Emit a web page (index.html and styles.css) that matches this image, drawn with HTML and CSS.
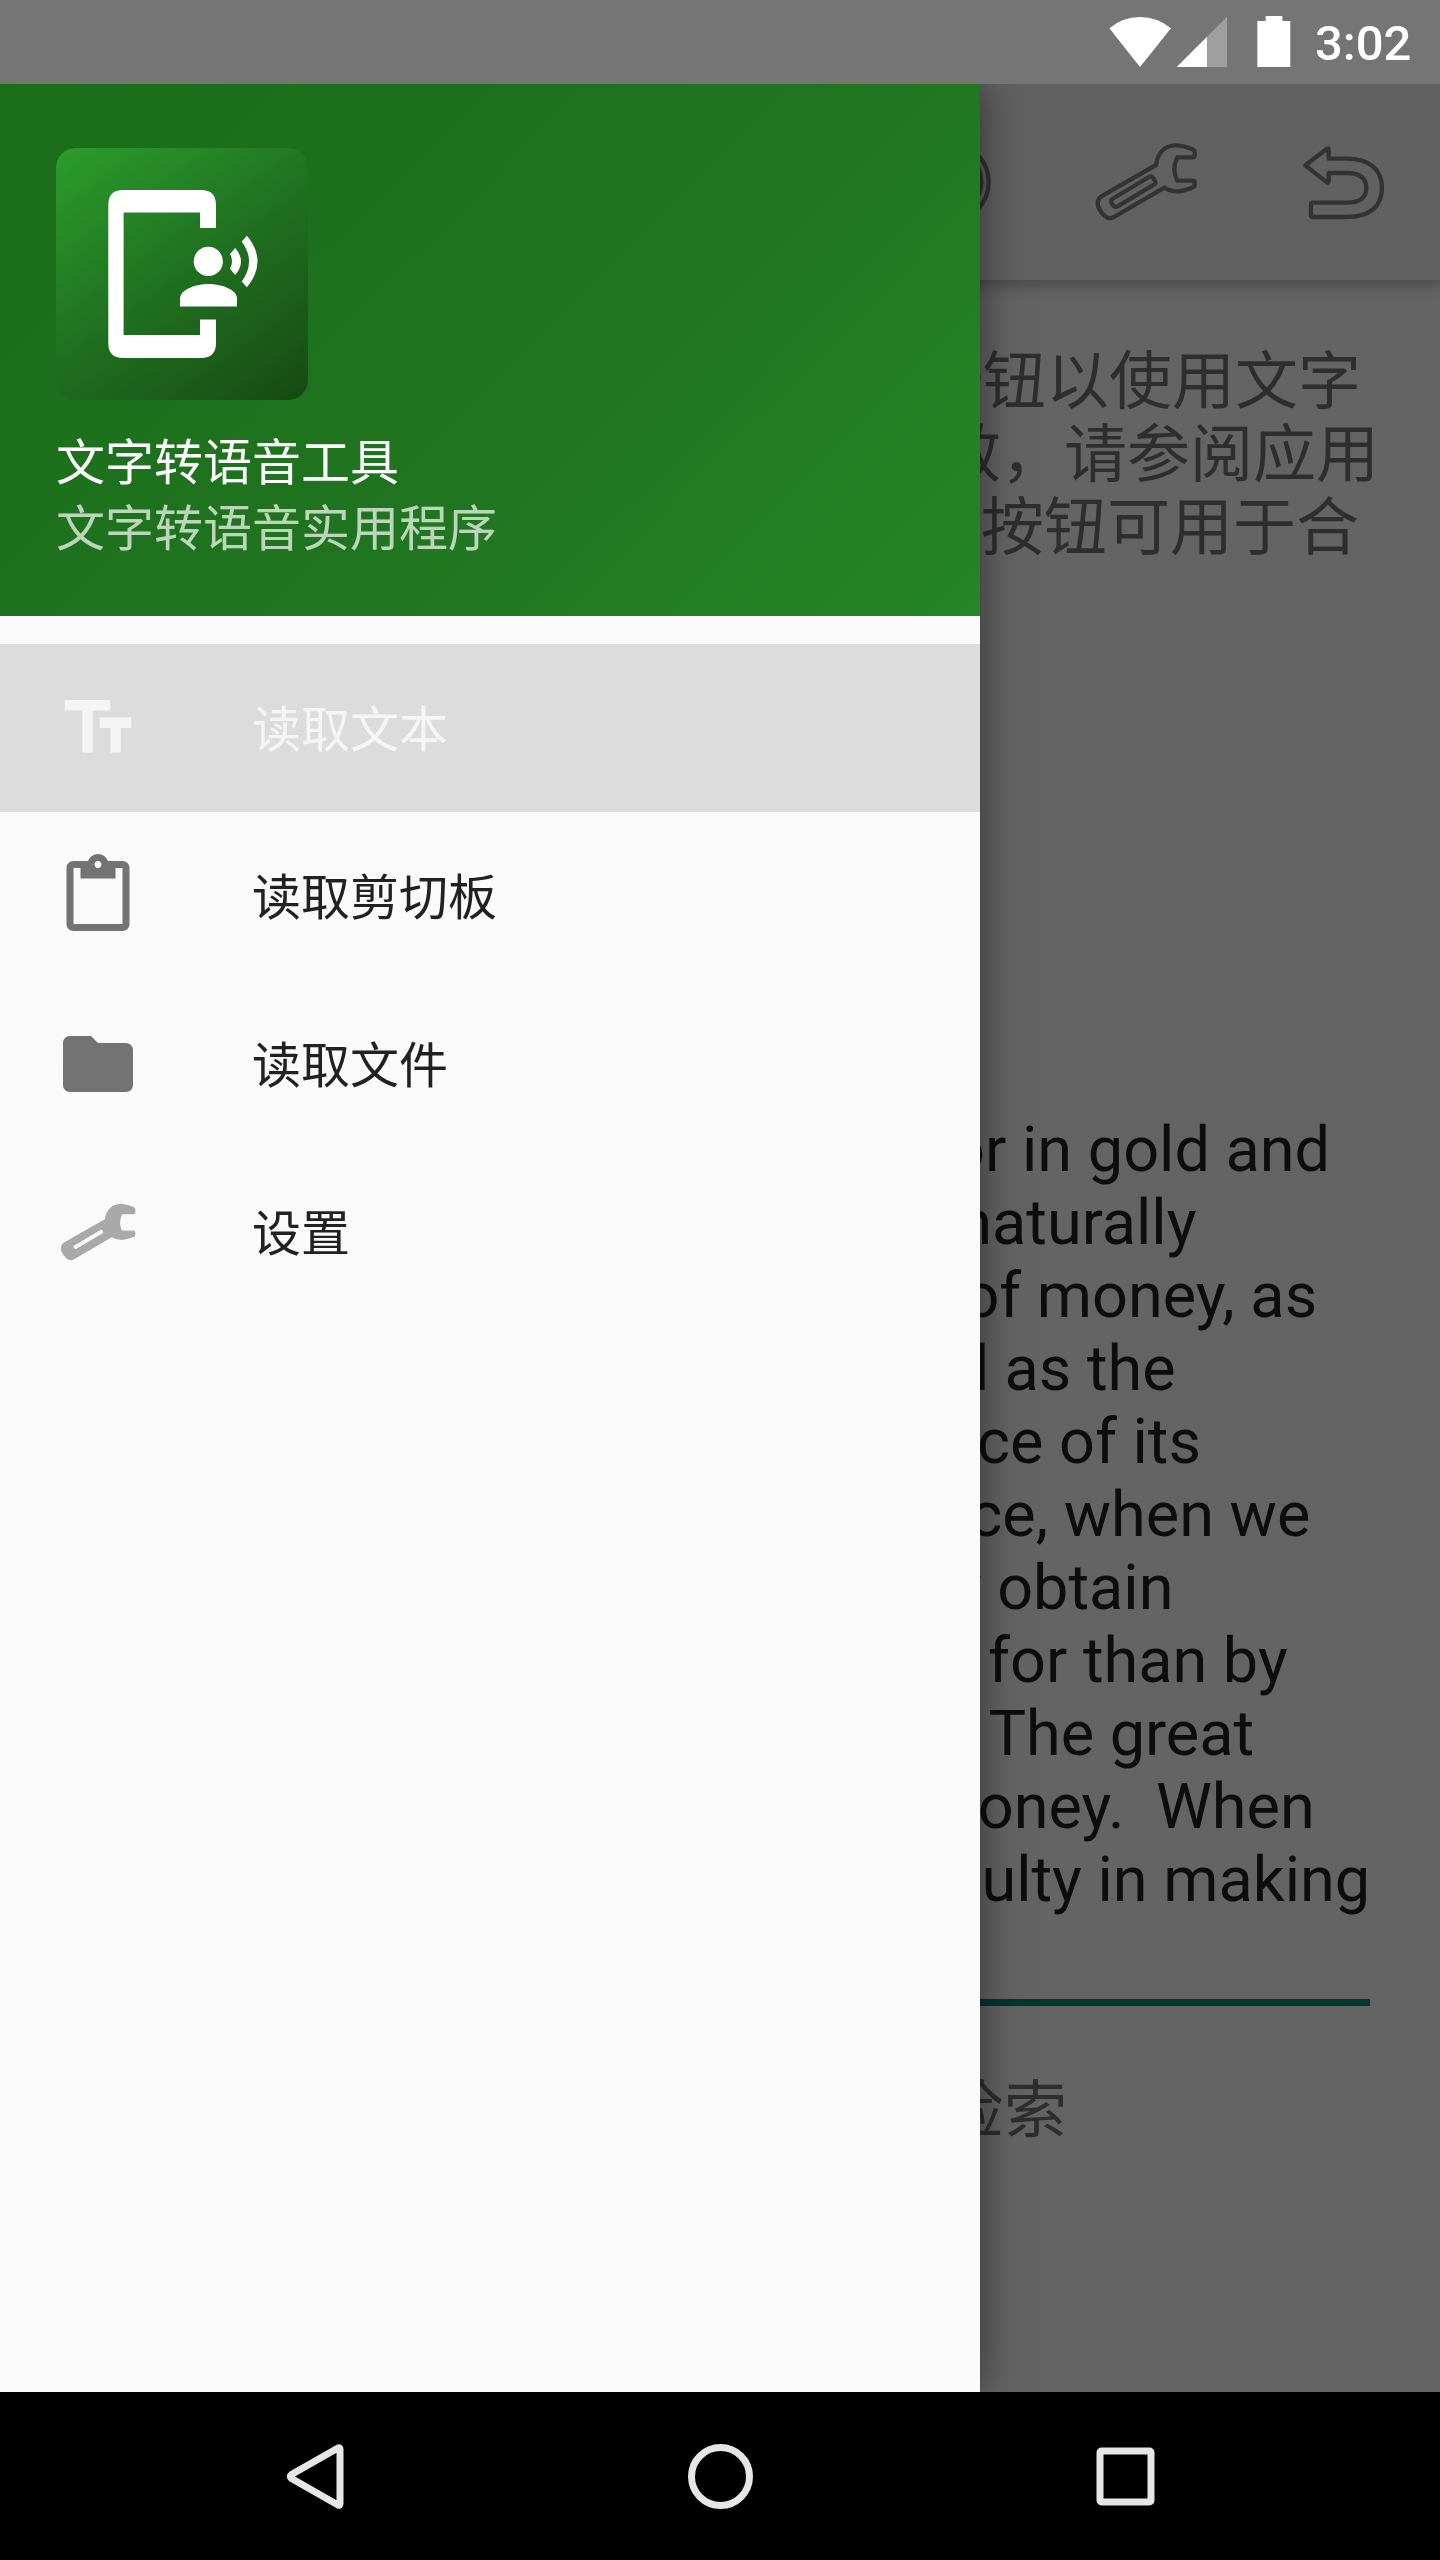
FILE: index.html
```html
<!DOCTYPE html>
<html lang="zh-CN">
<head>
<meta charset="utf-8">
<title>文字转语音工具</title>
<link rel="stylesheet" href="styles.css">
</head>
<body>
<div class="phone">
  <header class="status">
    <svg class="status-icons" width="140" height="84" viewBox="0 0 420 252">
      <path fill="#fff" d="M88 85Q128 51 180 51T273 85L180 201Z"/>
      <path fill="#9f9f9f" d="M441 50V201H380V111Z"/>
      <path fill="#fff" d="M381 110V201H290Z"/>
    </svg>
    <svg class="battery" width="34" height="84" viewBox="0 0 102 252">
      <path fill="#fff" d="M26 48H76V63H100V201H1V63H26Z"/>
    </svg>
    <span class="clock">3:02</span>
  </header>

  <div class="screen">
    <div class="toolbar">
      <svg class="tool" width="200" height="196" viewBox="-342 12 600 588">
        <circle cx="-33" cy="306" r="119"/><circle cx="-33" cy="306" r="97"/>
      </svg>
      <svg class="tool" width="200" height="196" viewBox="258 12 600 588">
        <path d="M588 255C593 218 615 196 648 196C668 196 686 203 700 209Q704 211 704 216V226Q704 232 698 232H652Q634 268 652 302H698Q704 302 704 308V316Q704 321 699 322C672 334 640 341 613 323L462 411Q446 419 434 408Q421 396 414 379Q410 359 424 349L588 255Z"/>
        <path d="M457 357L567 291Q574 287 578 292L586 304Q588 310 582 314L473 379Q465 383 460 377L454 368Q452 361 457 357Z"/>
      </svg>
      <svg class="tool" width="194" height="196" viewBox="858 12 582 588">
        <path d="M1036 256L1101 206Q1106 203 1106 209V236H1160C1228 236 1266 268 1266 324C1266 380 1228 411 1160 411H1058Q1053 411 1053 406V373Q1053 368 1058 368H1160C1202 368 1219 350 1219 324C1219 296 1202 279 1160 279H1106V304Q1106 310 1101 307Z"/>
      </svg>
    </div>
    <main class="content">
      <div class="hint">
        <div class="hint-line first">请点击播放按钮以使用文字</div>
        <div class="hint-line second">如果语音无效，请参阅应用</div>
        <div class="hint-line third">设置。分享按钮可用于合</div>
      </div>
      <div class="editor">
        <div>That wealth consists in money, or in gold and</div>
        <div>silver, is a popular notion which naturally</div>
        <div>arises from the double function of money, as</div>
        <div>the instrument of commerce and as the</div>
        <div>measure of value.  In consequence of its</div>
        <div>being the instrument of commerce, when we</div>
        <div>have money we can more readily obtain</div>
        <div>whatever else we have occasion for than by</div>
        <div>means of any other commodity.  The great</div>
        <div>affair, we always find, is to get money.  When</div>
        <div>that is obtained, there is no difficulty in making</div>
      </div>
      <div class="caption">文字将从剪切板检索</div>
    </main>
    <div class="scrim"></div>

    <aside class="drawer">
      <div class="drawer-head">
        <svg class="app-icon" width="252" height="252" viewBox="0 0 252 252" fill="#fff">
          <path d="M67 42H145Q160 42 160 57V80H144V64.5H67.6V187H144V171.5H160V195Q160 210 145 210H67Q52.3 210 52.3 195V57Q52.3 42 67 42Z"/>
          <circle cx="152.3" cy="113.4" r="14.6"/>
          <path d="M124 158.4V150.5C124 141 141 136 152.5 136S181 141 181 150.5V158.4Z"/>
          <path d="M179.2 99.9Q190.8 113.4 179.2 127L174 120.8Q178 113.4 174 106Z"/>
          <path d="M190.9 87.7Q212.2 113.4 190.9 139.2L185.7 133.5Q200.3 113.4 185.7 93.4Z"/>
        </svg>
        <div class="app-name">文字转语音工具</div>
        <div class="app-desc">文字转语音实用程序</div>
      </div>
      <nav class="menu">
        <a class="item active">
          <svg width="84" height="84" viewBox="0 0 24 24"><path d="M2.5 4v3h5v12h3V7h5V4h-13zm19 5h-9v3h3v7h3v-7h3V9z"/></svg>
          <span>读取文本</span>
        </a>
        <a class="item">
          <svg width="84" height="84" viewBox="0 0 24 24"><path d="M19 2h-4.18C14.4.84 13.3 0 12 0c-1.3 0-2.4.84-2.82 2H5c-1.1 0-2 .9-2 2v16c0 1.1.9 2 2 2h14c1.1 0 2-.9 2-2V4c0-1.1-.9-2-2-2zm-7 0c.55 0 1 .45 1 1s-.45 1-1 1-1-.45-1-1 .45-1 1-1zm7 18H5V4h2v3h10V4h2v16z"/></svg>
          <span>读取剪切板</span>
        </a>
        <a class="item">
          <svg width="84" height="84" viewBox="0 0 24 24"><path d="M10 4H4c-1.1 0-1.99.9-1.99 2L2 18c0 1.1.9 2 2 2h16c1.1 0 2-.9 2-2V8c0-1.1-.9-2-2-2h-8l-2-2z"/></svg>
          <span>读取文件</span>
        </a>
        <a class="item">
          <svg class="wrench" width="84" height="84" viewBox="391 138 334 334"><path fill-rule="evenodd" d="M588 255C593 218 615 196 648 196C668 196 686 203 700 209Q704 211 704 216V226Q704 232 698 232H652Q634 268 652 302H698Q704 302 704 308V316Q704 321 699 322C672 334 640 341 613 323L462 411Q446 419 434 408Q421 396 414 379Q410 359 424 349L588 255ZM459 359L568 294Q574 292 579 300Q583 307 578 312L472 375Q465 377 460 370Q457 364 459 359Z"/></svg>
          <span>设置</span>
        </a>
      </nav>
    </aside>
  </div>

  <footer class="navbar">
    <svg width="72" height="72" viewBox="0 0 72 72"><path d="M61 9.500V63.500Q61 66 59 65L12.500 38.500Q10 36.500 12.500 34.500L59 8Q61 7 61 9.500Z"/></svg>
    <svg width="72" height="72" viewBox="0 0 72 72"><circle cx="36.500" cy="36.500" r="29"/></svg>
    <svg width="72" height="72" viewBox="0 0 72 72"><rect x="11" y="11" width="51" height="51" rx="1.500"/></svg>
  </footer>
</div>
</body>
</html>
```
FILE: styles.css
```css
* { box-sizing: border-box; }
body { margin: 0; font-family: Roboto, "Noto Sans CJK SC", sans-serif; }
svg { display: block; flex: none; }
.phone { display: flex; flex-direction: column; width: 1440px; height: 2560px; overflow: hidden; background: #000; }

.status { display: flex; justify-content: flex-end; height: 84px; background: #757575; color: #fff; }
.status-icons { margin-right: 37px; overflow: visible; }
.battery { margin-right: 24px; }
.clock { width: 125px; font-size: 49px; font-weight: 500; line-height: 88px; white-space: nowrap; }

.screen { position: relative; flex: 1; display: flex; flex-direction: column; overflow: hidden; background: #fafafa; }
.toolbar { position: relative; display: flex; justify-content: flex-end; flex: none; height: 196px; background: #f3f3f3; box-shadow: 0 4px 16px rgba(0,0,0,.32); }
.tool { fill: none; stroke: #808080; stroke-width: 13; stroke-linejoin: round; }

.content { padding: 65px 70px 0; font-size: 63px; line-height: 73px; color: #737373; white-space: nowrap; }
.hint { height: 768px; margin-right: -70px; text-align: right; }
.first { padding-right: 79px; }
.second { padding-right: 61px; }
.third { padding-right: 81px; }
.editor { height: 893px; border-bottom: 7px solid #00897b; color: #212121; }
.editor div { white-space: pre; }
.editor div:nth-child(3),
.editor div:nth-child(4),
.editor div:nth-child(5) { padding-left: 2px; }
.editor div:nth-child(10) { padding-left: 1px; }
.editor div:nth-child(6) { margin-left: -1px; }
.editor div:nth-child(1),
.editor div:nth-child(8),
.editor div:nth-child(9),
.editor div:nth-child(11) { padding-left: 3px; }
.caption { width: 997px; margin-top: 68px; text-align: right; }

.scrim { position: absolute; inset: 0; background: rgba(0,0,0,.6); }
.drawer { position: absolute; inset: 0 auto 0 0; width: 980px; background: #fafafa; box-shadow: 0 0 40px rgba(0,0,0,.5); }
.drawer-head { height: 532px; padding: 64px 56px 0; background: linear-gradient(135deg, #1a6e18, #20731f 50%, #248625); color: #fff; font-size: 49px; line-height: 66px; }
.app-icon { margin-bottom: 31px; border-radius: 20px; background: linear-gradient(145deg, #2b9d2b, #207020 50%, #164a13); }
.app-desc { color: rgba(255,255,255,.7); }
.menu { padding-top: 28px; }
.item { display: flex; align-items: center; gap: 112px; height: 168px; padding-left: 56px; color: #212121; fill: #737373; font-size: 49px; line-height: 66px; }
.item span { padding-top: 6px; }
.active { background: #dcdcdc; color: #f5f5f5; fill: #f5f5f5; }
.wrench { fill: #a9a9a9; stroke: #a9a9a9; stroke-width: 5; }

.navbar { display: flex; justify-content: center; align-items: center; gap: 333px; height: 168px; background: #000; }
.navbar svg { fill: none; stroke: #e6e6e6; stroke-width: 7; stroke-linejoin: round; }
```
